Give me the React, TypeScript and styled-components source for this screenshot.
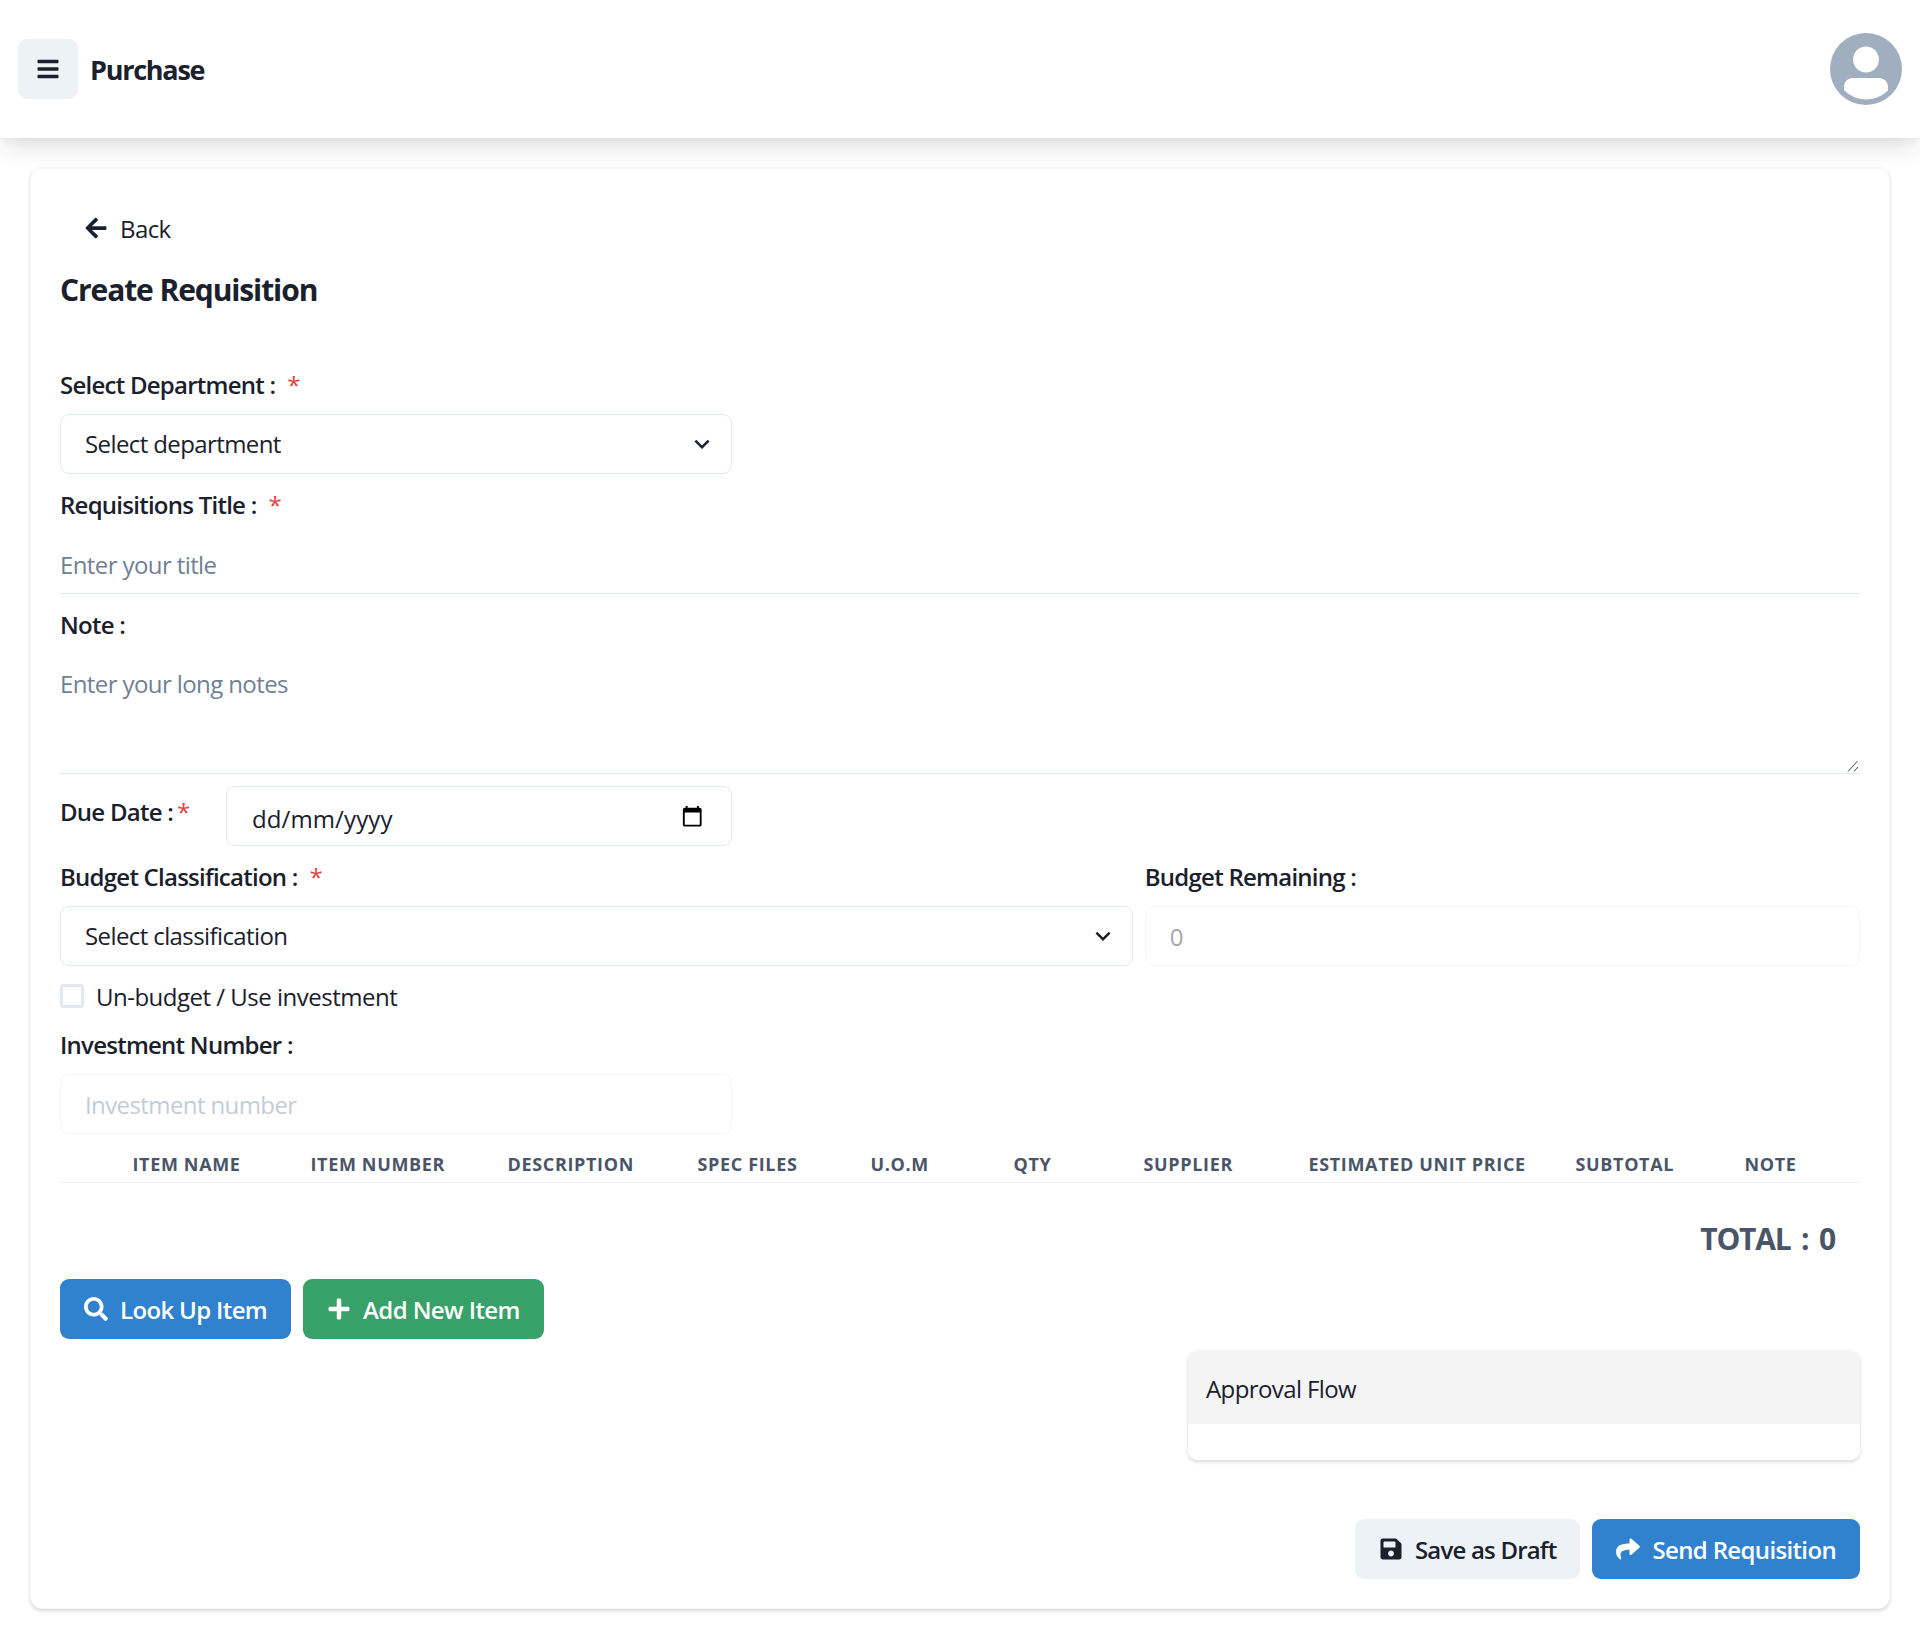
import React from "react";
import styled, { createGlobalStyle } from "styled-components";
import { FaArrowLeft, FaBars, FaPlus, FaSave, FaSearch, FaShare } from "react-icons/fa";

const TABLE_HEADERS = [
  "Item Name",
  "Item Number",
  "Description",
  "Spec Files",
  "U.O.M",
  "Qty",
  "Supplier",
  "Estimated Unit Price",
  "Subtotal",
  "Note",
];

const GlobalStyle = createGlobalStyle`
  * { box-sizing: border-box; }
  body {
    margin: 0;
    background: #fff;
    color: #1a202c;
    font-family: "Open Sans", "Liberation Sans", sans-serif;
    font-size: 24px;
    line-height: 36px;
    letter-spacing: -0.6px;
  }
  input, select, textarea, button {
    font-family: inherit;
    letter-spacing: inherit;
  }
`;

const TopBar = styled.header`
  height: 138px;
  padding: 0 18px;
  display: flex;
  align-items: center;
  justify-content: space-between;
  background: #fff;
  box-shadow: 0 15px 22px -4px rgba(0, 0, 0, 0.1), 0 6px 9px -3px rgba(0, 0, 0, 0.05);
`;

const TopLeft = styled.div`
  display: flex;
  align-items: center;
  gap: 12px;
`;

const MenuButton = styled.button`
  width: 60px;
  height: 60px;
  border: 0;
  border-radius: 9px;
  background: #edf2f7;
  color: #1a202c;
  display: flex;
  align-items: center;
  justify-content: center;
  font-size: 24px;
`;

const PageName = styled.span`
  padding-top: 2px;
  font-size: 27px;
  font-weight: 700;
  line-height: 40px;
  letter-spacing: -1.25px;
`;

const Avatar = styled.div`
  width: 72px;
  height: 72px;
  border-radius: 50%;
  background: #a0aec0;
  color: #fff;
  overflow: hidden;
  svg {
    display: block;
    width: 100%;
    height: 100%;
  }
`;

const Main = styled.main`
  padding: 30px;
`;

const Card = styled.section`
  padding: 30px 29px 29px;
  border: 1px solid #f4f6f8;
  border-radius: 12px;
  background: #fff;
  box-shadow: 0 1.5px 4.5px 0 rgba(0, 0, 0, 0.1), 0 1.5px 3px 0 rgba(0, 0, 0, 0.06);
`;

const BackButton = styled.button`
  height: 60px;
  margin-top: -1px;
  padding: 0 24px;
  border: 0;
  background: transparent;
  color: #1a202c;
  display: inline-flex;
  align-items: center;
  gap: 12px;
  font-size: 24px;
  font-weight: 500;
`;

const Heading = styled.h2`
  margin: 9px 0 54px;
  font-size: 30px;
  font-weight: 700;
  line-height: 45px;
  letter-spacing: -1.1px;
`;

const Field = styled.div`
  margin-top: 12px;
  min-width: 0;
`;

const Label = styled.label`
  display: block;
  height: 48px;
  padding-top: 1px;
  font-weight: 600;
  letter-spacing: -0.75px;
  white-space: nowrap;
`;

const Required = styled.span<{ $gap?: number }>`
  margin-left: ${(p) => p.$gap ?? 12}px;
  font-weight: 500;
  color: #e53e3e;
`;

const SelectWrap = styled.div<{ $narrow?: boolean }>`
  position: relative;
  width: ${(p) => (p.$narrow ? "672px" : "100%")};
`;

const Select = styled.select`
  width: 100%;
  height: 60px;
  padding: 0 48px 2px 24px;
  border: 1.5px solid #e2e8f0;
  border-radius: 9px;
  background: #fff;
  color: #1a202c;
  font-size: 24px;
  appearance: none;
  outline: none;
`;

const Chevron = styled.svg`
  position: absolute;
  top: 15px;
  right: 15px;
  width: 30px;
  height: 30px;
  pointer-events: none;
`;

const FlushedInput = styled.input`
  display: block;
  width: 100%;
  height: 60px;
  padding: 2px 0 0;
  border: 0;
  border-bottom: 1.5px solid #e2e8f0;
  background: transparent;
  color: #1a202c;
  font-size: 24px;
  outline: none;
  &::placeholder {
    color: #718096;
    opacity: 1;
  }
`;

const AreaWrap = styled.div`
  position: relative;
`;

const FlushedArea = styled.textarea`
  display: block;
  width: 100%;
  height: 120px;
  padding: 12px 0 0;
  border: 0;
  border-bottom: 1.5px solid #e2e8f0;
  background: transparent;
  color: #1a202c;
  font-size: 24px;
  line-height: 36px;
  resize: none;
  outline: none;
  &::placeholder {
    color: #718096;
    opacity: 1;
  }
`;

const ResizeGrip = styled.svg`
  position: absolute;
  right: 1px;
  bottom: 2px;
  width: 12px;
  height: 12px;
  pointer-events: none;
`;

const DueRow = styled.div`
  margin-top: 12px;
  display: flex;
  align-items: flex-start;
`;

const DueLabel = styled.label`
  width: 165.5px;
  padding-top: 8px;
  font-weight: 600;
  letter-spacing: -0.75px;
  white-space: nowrap;
`;

const DateBox = styled.div`
  width: 506.5px;
  height: 60px;
  padding: 6px 28px 0 25.5px;
  border: 1.5px solid #e2e8f0;
  border-radius: 9px;
  display: flex;
  align-items: center;
  justify-content: space-between;
  letter-spacing: 0.1px;
  svg {
    width: 22.5px;
    height: 22.5px;
    margin-top: -6px;
  }
`;

const BudgetRow = styled.div`
  margin-top: 12px;
  display: grid;
  grid-template-columns: 3fr 2fr;
  column-gap: 12px;
  ${Field} {
    margin-top: 0;
  }
`;

const DisabledInput = styled.input<{ $narrow?: boolean }>`
  display: block;
  width: ${(p) => (p.$narrow ? "672px" : "100%")};
  height: 60px;
  padding: 0 24px;
  border: 1.5px solid #e2e8f0;
  border-radius: 9px;
  background: transparent;
  color: #1a202c;
  font-size: 24px;
  opacity: 0.4;
  outline: none;
  &::placeholder {
    color: #718096;
    opacity: 1;
  }
`;

const CheckRow = styled.label`
  margin-top: 12px;
  height: 36px;
  display: flex;
  align-items: center;
  gap: 12px;
`;

const CheckBox = styled.span`
  width: 24px;
  height: 24px;
  border: 3px solid #e2e8f0;
  border-radius: 3px;
  flex: none;
`;

const CheckText = styled.span`
  padding-top: 2px;
  letter-spacing: -0.5px;
`;

const HeadRow = styled.div`
  margin-top: 12px;
  height: 37px;
  padding-left: 72.5px;
  border-bottom: 1.5px solid #edf2f7;
  display: grid;
  grid-template-columns: 178px 197px 190px 173px 143px 130px 165px 267px 169px 1fr;
  align-items: center;
`;

const HeadCell = styled.div`
  color: #4a5568;
  font-size: 18px;
  font-weight: 700;
  line-height: 36px;
  letter-spacing: 0.65px;
  text-transform: uppercase;
  white-space: nowrap;
`;

const Total = styled.div`
  margin: 33px 0 18px;
  padding-right: 25px;
  color: #4a5568;
  font-size: 30px;
  font-weight: 700;
  line-height: 45px;
  letter-spacing: -1.2px;
  word-spacing: 4px;
  text-align: right;
`;

const ButtonRow = styled.div<{ $end?: boolean }>`
  display: flex;
  gap: 12px;
  justify-content: ${(p) => (p.$end ? "flex-end" : "flex-start")};
`;

const ActionButton = styled.button<{ $tone: "blue" | "green" | "gray" }>`
  height: 60px;
  padding: 0 24px;
  border: 0;
  border-radius: 9px;
  display: inline-flex;
  align-items: center;
  gap: 12px;
  font-size: 24px;
  font-weight: 600;
  white-space: nowrap;
  letter-spacing: ${(p) =>
    p.$tone === "gray" ? "-0.8px" : p.$tone === "blue" ? "-0.65px" : "-0.6px"};
  color: ${(p) => (p.$tone === "gray" ? "#1a202c" : "#fff")};
  background: ${(p) =>
    p.$tone === "blue" ? "#3182ce" : p.$tone === "green" ? "#38a169" : "#edf2f7"};
  svg {
    width: 24px;
    height: 24px;
    flex: none;
  }
`;

const ApprovalCard = styled.div`
  width: 672px;
  margin: 12px 0 59px auto;
  border-radius: 9px;
  background: #fff;
  overflow: hidden;
  box-shadow: 0 1.5px 4.5px 0 rgba(0, 0, 0, 0.1), 0 1.5px 3px 0 rgba(0, 0, 0, 0.06);
`;

const ApprovalHead = styled.div`
  height: 73px;
  padding: 2px 18px 0;
  display: flex;
  align-items: center;
  background: #f4f4f4;
`;

const ApprovalBody = styled.div`
  height: 36px;
`;

const SelectChevron = () => (
  <Chevron viewBox="0 0 24 24">
    <path fill="#1a202c" d="M16.59 8.59L12 13.17 7.41 8.59 6 10l6 6 6-6z" />
  </Chevron>
);

const App = () => {
  return (
    <>
      <GlobalStyle />
      <TopBar>
        <TopLeft>
          <MenuButton aria-label="Menu">
            <FaBars />
          </MenuButton>
          <PageName>Purchase</PageName>
        </TopLeft>
        <Avatar>
          <svg viewBox="0 0 128 128">
            <path
              fill="currentColor"
              d="M103,102.1388 C93.094,111.92 79.3504,118 64.1638,118 C48.8056,118 34.9294,111.768 25,101.7892 L25,95.2 C25,86.8096 31.981,80 40.6,80 L87.4,80 C96.019,80 103,86.8096 103,95.2 L103,102.1388 Z"
            />
            <path
              fill="currentColor"
              d="M63.9961647,24 C51.2938136,24 41,34.2938136 41,46.9961647 C41,59.7061864 51.2938136,70 63.9961647,70 C76.6985159,70 87,59.7061864 87,46.9961647 C87,34.2938136 76.6985159,24 63.9961647,24"
            />
          </svg>
        </Avatar>
      </TopBar>

      <Main>
        <Card>
          <BackButton>
            <FaArrowLeft />
            Back
          </BackButton>
          <Heading>Create Requisition</Heading>

          <Field>
            <Label>
              Select Department :<Required>*</Required>
            </Label>
            <SelectWrap $narrow>
              <Select defaultValue="">
                <option value="">Select department</option>
              </Select>
              <SelectChevron />
            </SelectWrap>
          </Field>

          <Field>
            <Label>
              Requisitions Title :<Required>*</Required>
            </Label>
            <FlushedInput placeholder="Enter your title" />
          </Field>

          <Field>
            <Label>Note :</Label>
            <AreaWrap>
              <FlushedArea placeholder="Enter your long notes" />
              <ResizeGrip viewBox="0 0 12 12">
                <path d="M1 11.5L10.5 1M7 11.5L11 7" stroke="#4a4a4a" strokeWidth="1" fill="none" />
              </ResizeGrip>
            </AreaWrap>
          </Field>

          <DueRow>
            <DueLabel>
              Due Date :<Required $gap={4}>*</Required>
            </DueLabel>
            <DateBox>
              <span>dd/mm/yyyy</span>
              <svg viewBox="0 0 24 24">
                <path
                  fill="#000"
                  d="M20 3h-1V1h-2v2H7V1H5v2H4c-1.1 0-2 .9-2 2v16c0 1.1.9 2 2 2h16c1.1 0 2-.9 2-2V5c0-1.1-.9-2-2-2zm0 18H4V8h16v13z"
                />
              </svg>
            </DateBox>
          </DueRow>

          <BudgetRow>
            <Field>
              <Label>
                Budget Classification :<Required>*</Required>
              </Label>
              <SelectWrap>
                <Select defaultValue="">
                  <option value="">Select classification</option>
                </Select>
                <SelectChevron />
              </SelectWrap>
            </Field>
            <Field>
              <Label>Budget Remaining :</Label>
              <DisabledInput disabled value="0" readOnly />
            </Field>
          </BudgetRow>

          <CheckRow>
            <CheckBox />
            <CheckText>Un-budget / Use investment</CheckText>
          </CheckRow>

          <Field>
            <Label>Investment Number :</Label>
            <DisabledInput $narrow disabled placeholder="Investment number" />
          </Field>

          <HeadRow>
            {TABLE_HEADERS.map((header) => (
              <HeadCell key={header}>{header}</HeadCell>
            ))}
          </HeadRow>

          <Total>TOTAL : 0</Total>

          <ButtonRow>
            <ActionButton $tone="blue">
              <FaSearch />
              Look Up Item
            </ActionButton>
            <ActionButton $tone="green">
              <FaPlus />
              Add New Item
            </ActionButton>
          </ButtonRow>

          <ApprovalCard>
            <ApprovalHead>Approval Flow</ApprovalHead>
            <ApprovalBody />
          </ApprovalCard>

          <ButtonRow $end>
            <ActionButton $tone="gray">
              <FaSave />
              Save as Draft
            </ActionButton>
            <ActionButton $tone="blue">
              <FaShare />
              Send Requisition
            </ActionButton>
          </ButtonRow>
        </Card>
      </Main>
    </>
  );
};

export default App;
